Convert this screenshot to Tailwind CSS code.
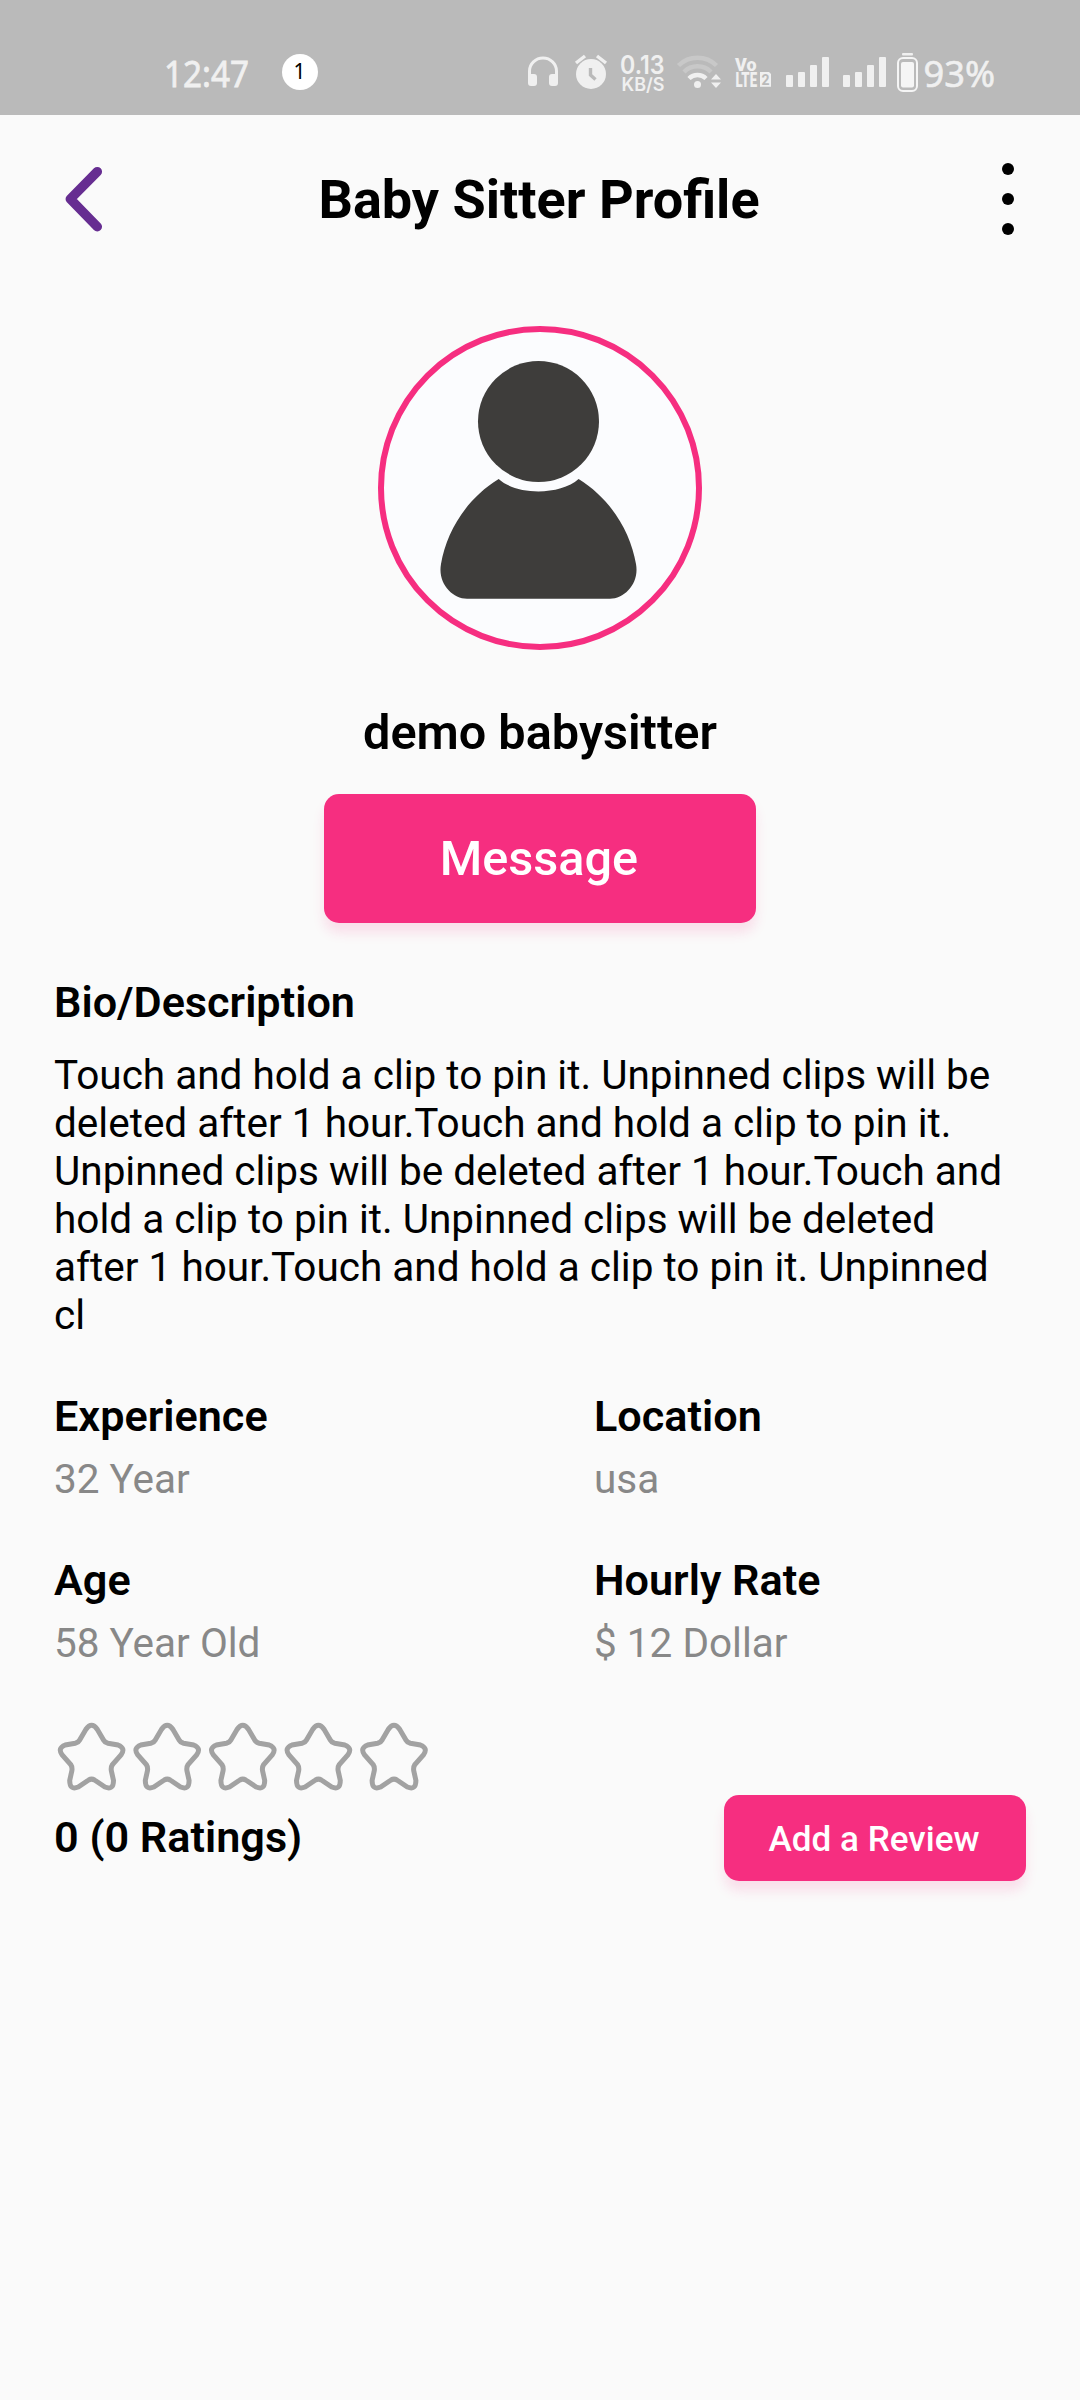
<!DOCTYPE html>
<html lang="en">
<head>
<meta charset="utf-8">
<title>Baby Sitter Profile</title>
<script src="https://cdn.jsdelivr.net/npm/@tailwindcss/browser@4"></script>
</head>
<body class="w-[1080px] h-[2400px] overflow-hidden bg-[#fafafa] text-black font-[Roboto,sans-serif]">
<div class="flex flex-col">
  <!-- Status bar -->
  <header class="flex h-[115px] bg-[#bababa] text-[#f0f0f0] fill-[#f0f0f0] whitespace-nowrap">
    <svg class="ml-[160px] w-[100px] h-[115px] overflow-visible" viewBox="160 0 100 115"><text x="164" y="86.5" textLength="85" lengthAdjust="spacingAndGlyphs" stroke="#f0f0f0" stroke-width="0.8" class="font-[Noto_Sans,sans-serif] text-[37px]">12:47</text></svg>
    <svg class="ml-[22px] w-[36px] h-[115px] overflow-visible" viewBox="282 0 36 115"><circle cx="300" cy="72" r="18" fill="#fff"/><text x="299.5" y="79" text-anchor="middle" fill="#000" class="font-[Noto_Sans,sans-serif] text-[21px]">1</text></svg>
    <svg class="ml-[209px] w-[32px] h-[115px] overflow-visible" viewBox="527 0 32 115"><path d="M529.5 80V71a13.5 13 0 0 1 27 0V80" fill="none" stroke="#f0f0f0" stroke-width="3"/><path d="M528 74h6q3 0 3 3v6q0 3-3 3h-3q-3 0-3-3zM558 74h-6q-3 0-3 3v6q0 3 3 3h3q3 0 3-3z"/></svg>
    <svg class="ml-[15px] w-[34px] h-[115px] overflow-visible" viewBox="574 0 34 115"><circle cx="591" cy="74" r="15"/><path d="M576 63l9-7M606 63l-9-7" stroke="#f0f0f0" stroke-width="3.4"/><path d="M590.5 68v7l5 4.500" fill="none" stroke="#bababa" stroke-width="3.4"/></svg>
    <svg class="ml-[12px] w-[46px] h-[115px] overflow-visible" viewBox="620 0 46 115"><text x="620" y="73.500" textLength="44.5" lengthAdjust="spacingAndGlyphs" class="font-[Inter,sans-serif] text-[25px] font-semibold">0.13</text><text x="621.5" y="90.500" textLength="43" lengthAdjust="spacingAndGlyphs" class="font-[Inter,sans-serif] text-[18px] font-semibold">KB/S</text></svg>
    <svg class="ml-[10px] w-[46px] h-[115px] overflow-visible" viewBox="676 0 46 115"><g fill="none" stroke-width="4.5"><path d="M678.500 65.500a27 27 0 0 1 38 0" stroke="#c8c8c8"/><path d="M684 72a19 19 0 0 1 27 0" stroke="#c8c8c8"/><path d="M689 78.500a12 12 0 0 1 17 0" stroke="#f0f0f0"/></g><circle cx="697.500" cy="84.500" r="3.5"/><path d="M711 79.500l5-5.500 5 5.500zM711 82.500l5 5.500 5-5.500z"/></svg>
    <svg class="ml-[12px] w-[38px] h-[115px] overflow-visible" viewBox="734 0 38 115"><text x="735" y="71" textLength="21.500" lengthAdjust="spacingAndGlyphs" class="text-[19px] font-black">Vo</text><text x="735.500" y="86.800" textLength="21.500" lengthAdjust="spacingAndGlyphs" class="text-[20px] font-black">LTE</text><path d="M760 72h9l2 2v12.800h-11z"/><text x="765.500" y="84.500" text-anchor="middle" fill="#bababa" class="text-[14px] font-bold">2</text></svg>
    <svg class="ml-[14px] w-[43px] h-[115px] overflow-visible" viewBox="786 0 43 115"><rect x="786" y="75" width="7" height="12" rx="1"/><rect x="798" y="72" width="7" height="15" rx="1"/><rect x="810" y="65" width="7" height="22" rx="1"/><rect x="822" y="57" width="7" height="30" rx="1"/></svg>
    <svg class="ml-[14px] w-[43px] h-[115px] overflow-visible" viewBox="786 0 43 115"><rect x="786" y="75" width="7" height="12" rx="1"/><rect x="798" y="72" width="7" height="15" rx="1"/><rect x="810" y="65" width="7" height="22" rx="1"/><rect x="822" y="57" width="7" height="30" rx="1"/></svg>
    <svg class="ml-[10px] w-[22px] h-[115px] overflow-visible" viewBox="896 0 22 115"><rect x="902" y="53" width="11" height="2.500" rx="1"/><rect x="898" y="58" width="19" height="33" rx="5" fill="none" stroke="#f5f5f5" stroke-width="2"/><rect x="901" y="62" width="13" height="25.500" rx="2" fill="#f5f5f5"/></svg>
    <svg class="ml-[4px] w-[80px] h-[115px] overflow-visible" viewBox="922 0 80 115"><text x="923.5" y="86.500" textLength="71.500" lengthAdjust="spacingAndGlyphs" stroke="#f0f0f0" stroke-width="0.6" class="font-[Noto_Sans,sans-serif] text-[37px]">93%</text></svg>
  </header>

  <!-- App bar -->
  <nav class="grid grid-cols-[40px_1fr_40px] h-[168px] items-center pl-[64px] pr-[66px]">
    <svg class="w-[40px] h-[66px]" viewBox="64 166 40 66"><path d="M97.300 171.700L70.300 199l27 27.700" fill="none" stroke="#662d91" stroke-width="9.500" stroke-linecap="round" stroke-linejoin="round"/></svg>
    <h1 class="pt-[2px] text-center text-[54px] leading-[64px] font-bold whitespace-nowrap">Baby Sitter Profile</h1>
    <svg class="ml-auto w-[12px] h-[72px]" viewBox="0 0 12 72"><circle cx="6" cy="6" r="6"/><circle cx="6" cy="36" r="6"/><circle cx="6" cy="66" r="6"/></svg>
  </nav>

  <main class="flex flex-col px-[54px]">
    <section class="mt-[43px] flex flex-col items-center">
      <svg class="w-[324px] h-[324px]" viewBox="378 326 324 324"><circle cx="540" cy="488" r="159" fill="#fbfcfe" stroke="#f62e80" stroke-width="6"/><g fill="#3e3d3b"><circle cx="538.500" cy="421.500" r="60.500"/><path d="M498.700 479C516.500 495.500 560 495.500 578.600 479C611 499 630.500 532 636 564C639.500 583 625 598.700 610 598.700H467C452 598.700 437.500 583 441 564C446.500 532 466 499 498.700 479Z"/></g></svg>
      <h2 class="mt-[55px] text-[48.6px] leading-[56px] font-semibold">demo babysitter</h2>
      <button class="mt-[33px] flex h-[129px] w-[432px] items-center justify-center rounded-[15px] bg-[#f62e80] pr-[2px] text-[48.6px] leading-[56px] font-medium text-white shadow-[0_10px_12px_rgba(246,46,128,0.13)]">Message</button>
    </section>

    <section class="mt-[55px] flex flex-col gap-[23px]">
      <h3 class="text-[43.2px] leading-[50px] font-semibold">Bio/Description</h3>
      <p class="whitespace-nowrap text-[40.5px] leading-[48px]">Touch and hold a clip to pin it. Unpinned clips will be<br>deleted after 1 hour.Touch and hold a clip to pin it.<br>Unpinned clips will be deleted after 1 hour.Touch and<br>hold a clip to pin it. Unpinned clips will be deleted<br>after 1 hour.Touch and hold a clip to pin it. Unpinned<br>cl</p>
    </section>

    <dl class="mt-[53px] grid grid-cols-[540px_1fr] gap-y-[53px] [&_dt]:text-[43.2px] [&_dt]:leading-[50px] [&_dt]:font-semibold [&_dd]:text-[40.5px] [&_dd]:leading-[48px] [&_dd]:text-[#888]">
      <div class="flex flex-col gap-[13px]"><dt>Experience</dt><dd>32 Year</dd></div>
      <div class="flex flex-col gap-[13px]"><dt>Location</dt><dd>usa</dd></div>
      <div class="flex flex-col gap-[13px]"><dt>Age</dt><dd>58 Year Old</dd></div>
      <div class="flex flex-col gap-[13px]"><dt>Hourly Rate</dt><dd>$ 12 Dollar</dd></div>
    </dl>

    <section class="mt-[52px] flex justify-between">
      <div class="flex flex-col gap-[18px]">
        <svg class="w-[378px] h-[76px]" viewBox="54 1719 378 76">
          <defs><path id="star" d="M85.800 1729.500Q91.600 1721 97.400 1729.500L103.500 1740Q104.800 1742.500 108 1743.300L118 1745Q126 1748 121 1755L112.500 1764.500Q110.800 1767 111.300 1770.500L113.500 1780.500Q113.500 1790.500 105 1787L94.500 1780Q91.600 1778.300 88.700 1780L78.200 1787Q69.700 1790.500 69.700 1780.500L71.900 1770.500Q72.400 1767 70.700 1764.500L62.200 1755Q57.200 1748 65.200 1745L75.200 1743.300Q78.400 1742.500 79.700 1740Z" fill="none" stroke="#a2a2a2" stroke-width="5"/></defs>
          <use href="#star"/><use href="#star" x="75.600"/><use href="#star" x="151.200"/><use href="#star" x="226.800"/><use href="#star" x="302.400"/>
        </svg>
        <p class="text-[43.2px] leading-[50px] font-semibold">0 (0 Ratings)</p>
      </div>
      <button class="mt-[76px] flex h-[86px] w-[302px] items-center justify-center rounded-[15px] bg-[#f62e80] pr-[2px] pt-[1px] text-[35.1px] leading-[42px] font-medium text-white shadow-[0_10px_12px_rgba(246,46,128,0.13)]">Add a Review</button>
    </section>
  </main>
</div>
</body>
</html>
